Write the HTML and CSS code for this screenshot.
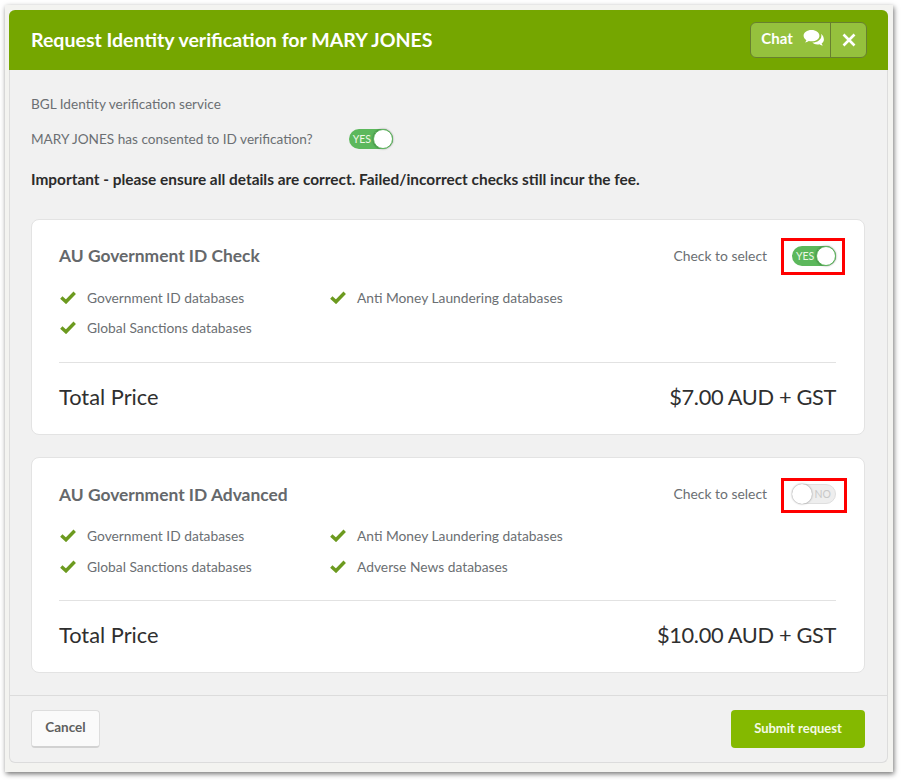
FILE: index.html
```html
<!DOCTYPE html>
<html lang="en">
<head>
<meta charset="utf-8">
<title>Request Identity verification</title>
<link rel="stylesheet" href="styles.css">
</head>
<body>
<div class="frame">
  <div class="modal">
    <header class="head">
      <h1 class="title">Request Identity verification for MARY JONES</h1>
      <div class="head-btns">
        <button class="hbtn chat">Chat
          <svg class="chat-icon" viewBox="0 0 22 18" width="22" height="18"><path fill="#fff" d="M8.5 1C4 1 .6 3.5.6 6.7c0 1.8 1.1 3.400 2.800 4.500-.3.900-.8 1.700-1.500 2.400 1.500-.2 2.800-.8 3.900-1.600.9.200 1.800.3 2.700.3 4.500 0 7.900-2.500 7.900-5.600S13 1 8.500 1z"/><path fill="#fff" d="M18.100 4.700c.2.600.3 1.300.3 2 0 3.900-3.900 6.800-9.100 6.900 1.200 1.200 3 1.900 5.100 1.900.7 0 1.400-.1 2.100-.3.900.7 2.100 1.200 3.400 1.400-.6-.6-1-1.300-1.300-2.100 1.400-.9 2.300-2.300 2.300-3.800 0-2.600-1.100-4.600-2.800-6z"/></svg>
        </button>
        <button class="hbtn close" aria-label="Close">
          <svg viewBox="0 0 14 14" width="14" height="14"><path stroke="#fff" stroke-width="2.600" d="M1.500 1.500l11 11M12.500 1.500l-11 11"/></svg>
        </button>
      </div>
    </header>
    <main class="body">
      <p class="line">BGL Identity verification service</p>
      <div class="consent">
        <span class="line">MARY JONES has consented to ID verification?</span>
        <span class="toggle on"><span class="tlabel">YES</span><span class="knob"></span></span>
      </div>
      <p class="important">Important - please ensure all details are correct. Failed/incorrect checks still incur the fee.</p>

      <section class="card">
        <div class="card-top">
          <h2 class="card-title">AU Government ID Check</h2>
          <div class="select">
            <span class="line">Check to select</span>
            <span class="mark mark-a"><span class="toggle on"><span class="tlabel">YES</span><span class="knob"></span></span></span>
          </div>
        </div>
        <ul class="checks">
          <li class="check"><svg class="tick" viewBox="0 0 16 13" width="16" height="13"><path fill="none" stroke="#6c9a1f" stroke-width="3.400" d="M1.300 6.500l4.700 4.300 8.700-9"/></svg>Government ID databases</li>
          <li class="check"><svg class="tick" viewBox="0 0 16 13" width="16" height="13"><path fill="none" stroke="#6c9a1f" stroke-width="3.400" d="M1.300 6.500l4.700 4.300 8.700-9"/></svg>Anti Money Laundering databases</li>
          <li class="check"><svg class="tick" viewBox="0 0 16 13" width="16" height="13"><path fill="none" stroke="#6c9a1f" stroke-width="3.400" d="M1.300 6.500l4.700 4.300 8.700-9"/></svg>Global Sanctions databases</li>
        </ul>
        <div class="total"><span>Total Price</span><span class="price">$7.00 AUD + GST</span></div>
      </section>

      <section class="card card-second">
        <div class="card-top">
          <h2 class="card-title">AU Government ID Advanced</h2>
          <div class="select">
            <span class="line">Check to select</span>
            <span class="mark mark-b"><span class="toggle off"><span class="knob"></span><span class="tlabel">NO</span></span></span>
          </div>
        </div>
        <ul class="checks">
          <li class="check"><svg class="tick" viewBox="0 0 16 13" width="16" height="13"><path fill="none" stroke="#6c9a1f" stroke-width="3.400" d="M1.300 6.500l4.700 4.300 8.700-9"/></svg>Government ID databases</li>
          <li class="check"><svg class="tick" viewBox="0 0 16 13" width="16" height="13"><path fill="none" stroke="#6c9a1f" stroke-width="3.400" d="M1.300 6.500l4.700 4.300 8.700-9"/></svg>Anti Money Laundering databases</li>
          <li class="check"><svg class="tick" viewBox="0 0 16 13" width="16" height="13"><path fill="none" stroke="#6c9a1f" stroke-width="3.400" d="M1.300 6.500l4.700 4.300 8.700-9"/></svg>Global Sanctions databases</li>
          <li class="check"><svg class="tick" viewBox="0 0 16 13" width="16" height="13"><path fill="none" stroke="#6c9a1f" stroke-width="3.400" d="M1.300 6.500l4.700 4.300 8.700-9"/></svg>Adverse News databases</li>
        </ul>
        <div class="total"><span>Total Price</span><span class="price">$10.00 AUD + GST</span></div>
      </section>
    </main>
    <footer class="foot">
      <button class="btn cancel">Cancel</button>
      <button class="btn submit">Submit request</button>
    </footer>
  </div>
</div>
</body>
</html>
```
FILE: styles.css
```css
* { box-sizing: border-box; }
html, body { margin: 0; padding: 0; background: #fff; }
body { width: 902px; height: 780px; overflow: hidden; font-family: "Lato", "Liberation Sans", sans-serif; color: #6a6a6a; }
.frame { margin: 5px 0 0 5px; width: 888px; height: 767px; padding: 5px 5px 8px 4px; background: #f3f3f0; box-shadow: 1px 2px 5px rgba(0,0,0,.55); }
.modal { height: 753px; display: flex; flex-direction: column; background: #f1f1f1; border: 1px solid #dcdcdc; border-top: 0; border-radius: 6px; }
.head { height: 60px; margin: 0 -1px; flex: none; display: flex; align-items: center; justify-content: space-between; padding: 0 21px 0 22px; background: #75a600; border-radius: 6px 6px 0 0; }
.title { margin: 0 0 2px; font-size: 19.560px; font-weight: 700; color: #fff; }
.head-btns { display: flex; height: 36px; margin-top: -1px; border: 1px solid #68802f; border-radius: 6px; background: #95c13d; overflow: hidden; }
.hbtn { border: 0; background: none; color: #fff; padding: 0; font: 700 15px "Lato", sans-serif; display: flex; align-items: center; justify-content: center; }
.chat { width: 80px; gap: 10px; padding: 0 0 3px 5px; border-right: 1px solid #68802f; }
.close { width: 35px; }
.body { flex: 1; padding: 24px 22px 0 21px; }
.line { margin: 0; font-size: 13.600px; line-height: 20px; color: #6b6f73; }
.consent { display: flex; align-items: center; margin-top: 15px; height: 20px; }
.toggle { display: inline-flex; align-items: center; width: 44px; height: 20px; border-radius: 10px; font: 400 10.500px/1 "Lato", sans-serif; position: relative; }
.toggle.on { background: #5cb85c; color: #eef7e6; padding-left: 4px; border: 0; }
.toggle.off { background: #eeeeee; color: #c8c8c8; border: 1px solid #dfdfdf; justify-content: flex-end; padding-right: 4px; }
.knob { position: absolute; top: 0; width: 20px; height: 20px; border-radius: 50%; background: #fff; box-shadow: 0 0 2px rgba(0,0,0,.5); }
.on .knob { right: 0; border: 1px solid #5cb85c; }
.off .knob { left: -1px; top: -1px; }
.consent .toggle { margin-left: 36px; }
.important { margin: 20px 0 0; font-size: 15.400px; line-height: 20px; font-weight: 700; color: #2b2b2b; }
.card { margin-top: 30px; height: 216px; background: #fff; border: 1px solid #e3e3e3; border-radius: 8px; padding: 0 28px 0 27px; }
.card-second { margin-top: 22px; }
.card-top { height: 62px; padding-top: 10px; display: flex; align-items: center; justify-content: space-between; }
.card-title { margin: 0 0 1px; font-size: 17.400px; font-weight: 700; color: #65686b; }
.card-second .card-title { margin: 1px 0 0; }
.select { display: flex; align-items: center; }
.select .line { font-size: 13.900px; }
.mark { display: flex; align-items: center; border: 3px solid #f00; margin-left: 14px; padding-left: 8px; }
.mark-a { width: 64px; height: 37px; margin-right: -9px; }
.mark-b { width: 66px; height: 35px; margin-right: -11px; margin-top: 3px; padding-bottom: 3px; }
.checks { list-style: none; margin: 0; padding: 0; display: grid; grid-template-columns: 270px 1fr; grid-auto-rows: 30px; height: 80px; }
.card-second .checks { row-gap: 1px; }
.check { display: flex; align-items: center; font-size: 13.800px; color: #6b6f73; height: 30px; }
.tick { margin: 0 11px 0 1px; flex: none; }
.total { border-top: 1px solid #e2e2e2; height: 72px; padding-bottom: 4px; display: flex; align-items: center; justify-content: space-between; font-size: 21.800px; color: #2f2f2f; }
.price { letter-spacing: -.35px; }
.foot { flex: none; height: 67px; margin-top: 21px; padding: 0 22px 0 21px; border-top: 1px solid #dcdcdc; display: flex; align-items: center; justify-content: space-between; }
.btn { height: 38px; border-radius: 4px; padding: 0 0 3px; font: 700 13.500px "Lato", sans-serif; }
.cancel { width: 69px; background: #fafafa; border: 1px solid #dddddd; border-bottom: 2px solid #d2d2d2; color: #5f5f5f; }
.submit { width: 134px; background: #84b900; border: 0; color: #f4f9e6; font-size: 13px; }
```
